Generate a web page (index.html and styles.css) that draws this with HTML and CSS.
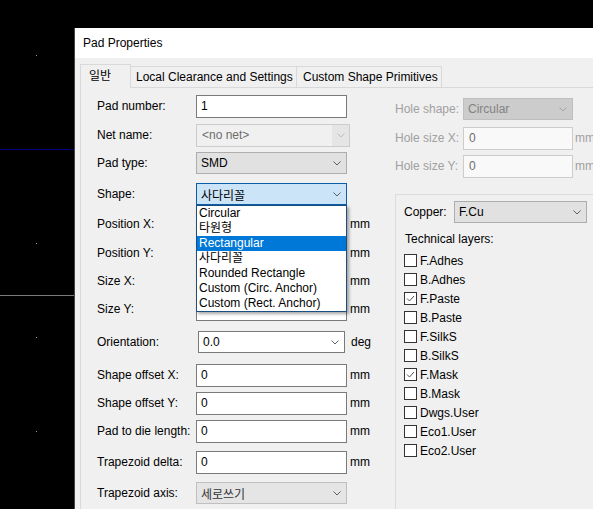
FILE: index.html
```html
<!DOCTYPE html>
<html lang="ko">
<head>
    <meta charset="UTF-8">
    <title>Pad Properties</title>
    <link rel="stylesheet" href="styles.css">
</head>
<body>
    <!-- canvas behind the dialog -->
    <div class="canvas-line line-blue"></div>
    <div class="canvas-line line-gray"></div>
    <div class="grid-dot dot-1"></div>
    <div class="grid-dot dot-2"></div>
    <div class="grid-dot dot-3"></div>
    <div class="grid-dot dot-4"></div>

    <div class="dialog">
        <div class="titlebar">Pad Properties</div>
        <div class="dialog-body">
            <div class="tabs">
                <div class="tab tab-general active">일반</div>
                <div class="tab tab-clearance">Local Clearance and Settings</div>
                <div class="tab tab-custom">Custom Shape Primitives</div>
            </div>

            <div class="page">
                <div class="col-left">
                    <div class="row first">
                        <span class="label">Pad number:</span>
                        <div class="input">1</div>
                    </div>
                    <div class="row mt7">
                        <span class="label">Net name:</span>
                        <div class="combo combo-net">
                            <span class="combo-text">&lt;no net&gt;</span>
                            <span class="net-btn"><svg class="chev" width="8" height="5" viewBox="0 0 8 5"><polyline points="0.5,0.5 4,4 7.5,0.5"/></svg></span>
                        </div>
                    </div>
                    <div class="row">
                        <span class="label">Pad type:</span>
                        <div class="combo combo-btn">
                            <span class="combo-text">SMD</span>
                            <svg class="chev" width="8" height="5" viewBox="0 0 8 5"><polyline points="0.5,0.5 4,4 7.5,0.5"/></svg>
                        </div>
                    </div>
                    <div class="row mt9">
                        <span class="label">Shape:</span>
                        <div class="shape-wrap">
                            <div class="combo combo-open">
                                <span class="combo-text">사다리꼴</span>
                                <svg class="chev" width="8" height="5" viewBox="0 0 8 5"><polyline points="0.5,0.5 4,4 7.5,0.5"/></svg>
                            </div>
                            <ul class="dropdown">
                                <li>Circular</li>
                                <li>타원형</li>
                                <li class="selected">Rectangular</li>
                                <li>사다리꼴</li>
                                <li>Rounded Rectangle</li>
                                <li>Custom (Circ. Anchor)</li>
                                <li>Custom (Rect. Anchor)</li>
                            </ul>
                        </div>
                    </div>
                    <div class="row mt8">
                        <span class="label">Position X:</span>
                        <div class="input"></div>
                        <span class="unit">mm</span>
                    </div>
                    <div class="row mt7">
                        <span class="label">Position Y:</span>
                        <div class="input"></div>
                        <span class="unit">mm</span>
                    </div>
                    <div class="row">
                        <span class="label">Size X:</span>
                        <div class="input"></div>
                        <span class="unit">mm</span>
                    </div>
                    <div class="row">
                        <span class="label">Size Y:</span>
                        <div class="input"></div>
                        <span class="unit">mm</span>
                    </div>
                    <div class="row mt11">
                        <span class="label">Orientation:</span>
                        <div class="combo combo-edit">
                            <span class="combo-text">0.0</span>
                            <svg class="chev" width="8" height="5" viewBox="0 0 8 5"><polyline points="0.5,0.5 4,4 7.5,0.5"/></svg>
                        </div>
                        <span class="unit unit-deg">deg</span>
                    </div>
                    <div class="row mt11">
                        <span class="label">Shape offset X:</span>
                        <div class="input">0</div>
                        <span class="unit">mm</span>
                    </div>
                    <div class="row">
                        <span class="label">Shape offset Y:</span>
                        <div class="input">0</div>
                        <span class="unit">mm</span>
                    </div>
                    <div class="row">
                        <span class="label">Pad to die length:</span>
                        <div class="input">0</div>
                        <span class="unit">mm</span>
                    </div>
                    <div class="row mt9">
                        <span class="label">Trapezoid delta:</span>
                        <div class="input">0</div>
                        <span class="unit">mm</span>
                    </div>
                    <div class="row mt9">
                        <span class="label">Trapezoid axis:</span>
                        <div class="combo combo-axis">
                            <span class="combo-text">세로쓰기</span>
                            <svg class="chev" width="8" height="5" viewBox="0 0 8 5"><polyline points="0.5,0.5 4,4 7.5,0.5"/></svg>
                        </div>
                    </div>
                </div>

                <div class="col-right">
                    <div class="row first">
                        <span class="label label-hole disabled">Hole shape:</span>
                        <div class="combo combo-disabled">
                            <span class="combo-text">Circular</span>
                            <svg class="chev" width="8" height="5" viewBox="0 0 8 5"><polyline points="0.5,0.5 4,4 7.5,0.5"/></svg>
                        </div>
                    </div>
                    <div class="row mt7">
                        <span class="label label-hole disabled">Hole size X:</span>
                        <div class="input input-disabled">0</div>
                        <span class="unit disabled">mm</span>
                    </div>
                    <div class="row">
                        <span class="label label-hole disabled">Hole size Y:</span>
                        <div class="input input-disabled">0</div>
                        <span class="unit disabled">mm</span>
                    </div>

                    <div class="layers-box">
                        <div class="row first">
                            <span class="label label-copper">Copper:</span>
                            <div class="combo combo-btn combo-copper">
                                <span class="combo-text">F.Cu</span>
                                <svg class="chev" width="8" height="5" viewBox="0 0 8 5"><polyline points="0.5,0.5 4,4 7.5,0.5"/></svg>
                            </div>
                        </div>
                        <div class="tech-title">Technical layers:</div>
                        <div class="checks">
                            <div class="check"><span class="box"></span>F.Adhes</div>
                            <div class="check"><span class="box"></span>B.Adhes</div>
                            <div class="check"><span class="box"><svg width="11" height="11" viewBox="0 0 11 11"><polyline points="2,5.5 4.5,8 9,3"/></svg></span>F.Paste</div>
                            <div class="check"><span class="box"></span>B.Paste</div>
                            <div class="check"><span class="box"></span>F.SilkS</div>
                            <div class="check"><span class="box"></span>B.SilkS</div>
                            <div class="check"><span class="box"><svg width="11" height="11" viewBox="0 0 11 11"><polyline points="2,5.5 4.5,8 9,3"/></svg></span>F.Mask</div>
                            <div class="check"><span class="box"></span>B.Mask</div>
                            <div class="check"><span class="box"></span>Dwgs.User</div>
                            <div class="check"><span class="box"></span>Eco1.User</div>
                            <div class="check"><span class="box"></span>Eco2.User</div>
                        </div>
                    </div>
                </div>
            </div>
        </div>
    </div>
</body>
</html>
```

FILE: styles.css
```css
/* 배경 (캔버스) */
html, body {
    margin: 0;
    width: 593px;
    height: 509px;
    overflow: hidden;
    background: #000;
}

body {
    position: relative;
    font-family: "Liberation Sans", "Noto Sans CJK KR", sans-serif;
    font-size: 12px;
    color: #000;
}

.canvas-line {
    position: absolute;
    left: 0;
    width: 74px;
    height: 1px;
}
.line-blue { top: 149px; background: #00007a; }
.line-gray { top: 295px; background: #7a7a7a; }

.grid-dot {
    position: absolute;
    left: 36px;
    width: 1px;
    height: 1px;
    background: #9a9a9a;
}
.dot-1 { top: 55px; }
.dot-2 { top: 243px; }
.dot-3 { top: 337px; }
.dot-4 { top: 431px; }

/* 대화상자 창 */
.dialog {
    position: absolute;
    left: 74px;
    top: 28px;
    width: 560px;
    height: 520px;
    border-left: 1px solid #454545;
    background: #f0f0f0;
}

.titlebar {
    height: 30px;
    line-height: 30px;
    padding-left: 8px;
    background: #fff;
}

.dialog-body {
    padding: 6px 0 0 5px;
}

/* 탭 */
.tabs {
    display: flex;
    align-items: flex-start;
    height: 23px;
    position: relative;
    z-index: 2;
}

.tab {
    box-sizing: border-box;
    height: 21px;
    margin-top: 2px;
    line-height: 20px;
    padding-left: 5px;
    border: 1px solid #d9d9d9;
    border-bottom: none;
    background: #f0f0f0;
    white-space: nowrap;
}
.tab + .tab { margin-left: -1px; }
.tab-general { width: 51px; padding-left: 8px; }
.tab-clearance { width: 167px; }
.tab-custom { width: 146px; padding-left: 6px; }

.tab.active {
    height: 24px;
    margin-top: 0;
    line-height: 22px;
}

.page {
    display: flex;
    height: 440px;
    margin-top: 0;
    padding: 7px 0 0 16px;
    border: 1px solid #d9d9d9;
    background: #f0f0f0;
}

/* 입력 행 */
.row {
    display: flex;
    align-items: center;
    height: 22px;
    margin-top: 6px;
    white-space: nowrap;
}
.row.first { margin-top: 0; }
.row.mt7 { margin-top: 7px; }
.row.mt8 { margin-top: 8px; }
.row.mt9 { margin-top: 9px; }
.row.mt11 { margin-top: 11px; }

.col-left { width: 298px; flex: none; }
.col-left .label { width: 99px; flex: none; }

.col-right { padding-top: 3px; }
.label-hole { width: 68px; flex: none; }

.disabled { color: #a0a0a0; }

.input {
    box-sizing: border-box;
    width: 151px;
    height: 23px;
    line-height: 21px;
    padding-left: 4px;
    border: 1px solid #7a7a7a;
    background: #fff;
}

.input-disabled {
    width: 110px;
    border-color: #cccccc;
    background: #f9f9f9;
    color: #6d6d6d;
    padding-left: 5px;
}

.unit { margin-left: 3px; }
.unit-deg { margin-left: 6px; }
.col-right .unit { margin-left: 2px; }

/* 콤보박스 */
.combo {
    box-sizing: border-box;
    display: flex;
    align-items: center;
    justify-content: space-between;
    width: 151px;
    height: 22px;
    padding: 0 5px 0 4px;
    border: 1px solid #adadad;
    background: #e1e1e1;
}

.chev {
    flex: none;
    fill: none;
    stroke: #606060;
    stroke-width: 1;
}

.combo-net {
    width: 154px;
    height: 23px;
    padding: 0;
    border-color: #cccccc;
    background: #f0f0f0;
    color: #6d6d6d;
}
.combo-net .combo-text { padding-left: 5px; }
.net-btn {
    display: flex;
    align-items: center;
    justify-content: center;
    width: 17px;
    height: 100%;
    background: #e5e5e5;
}
.net-btn .chev { stroke: #bdbdbd; }

.shape-wrap { position: relative; }

.combo-open {
    border-color: #0a5ea8;
    background: #cce4f7;
}

.combo-edit {
    width: 147px;
    margin-left: 2px;
    border-color: #7a7a7a;
    background: #fff;
}

.combo-axis {
    border-color: #bfbfbf;
    background: #e5e5e5;
    color: #333;
}

.combo-disabled {
    width: 110px;
    border-color: #bfbfbf;
    background: #cccccc;
    color: #838383;
}
.combo-disabled .chev { stroke: #a3a3a3; }

/* 펼쳐진 목록 */
.dropdown {
    position: absolute;
    left: 0;
    top: 22px;
    z-index: 5;
    box-sizing: border-box;
    width: 151px;
    margin: 0;
    padding: 0;
    list-style: none;
    border: 1px solid #1b4f82;
    background: #fff;
    box-shadow: 2px 2px 3px rgba(0, 0, 0, 0.35);
}

.dropdown li {
    height: 15px;
    line-height: 15px;
    padding-left: 2px;
}

.dropdown li.selected {
    background: #0078d7;
    color: #fff;
}

/* 레이어 그룹 */
.layers-box {
    box-sizing: border-box;
    width: 220px;
    height: 320px;
    margin-top: 17px;
    padding: 6px 0 0 8px;
    border: 1px solid #dcdcdc;
}

.label-copper { width: 50px; flex: none; }
.combo-copper { width: 133px; }

.tech-title {
    margin-top: 8px;
    height: 16px;
    line-height: 16px;
    padding-left: 1px;
}

.checks { margin-top: 4px; }

.check {
    display: flex;
    align-items: center;
    height: 19px;
}

.box {
    box-sizing: border-box;
    display: flex;
    align-items: center;
    justify-content: center;
    width: 13px;
    height: 13px;
    margin-right: 3px;
    border: 1px solid #333;
    background: #fff;
}

.box svg {
    fill: none;
    stroke: #555;
    stroke-width: 1;
}
```
